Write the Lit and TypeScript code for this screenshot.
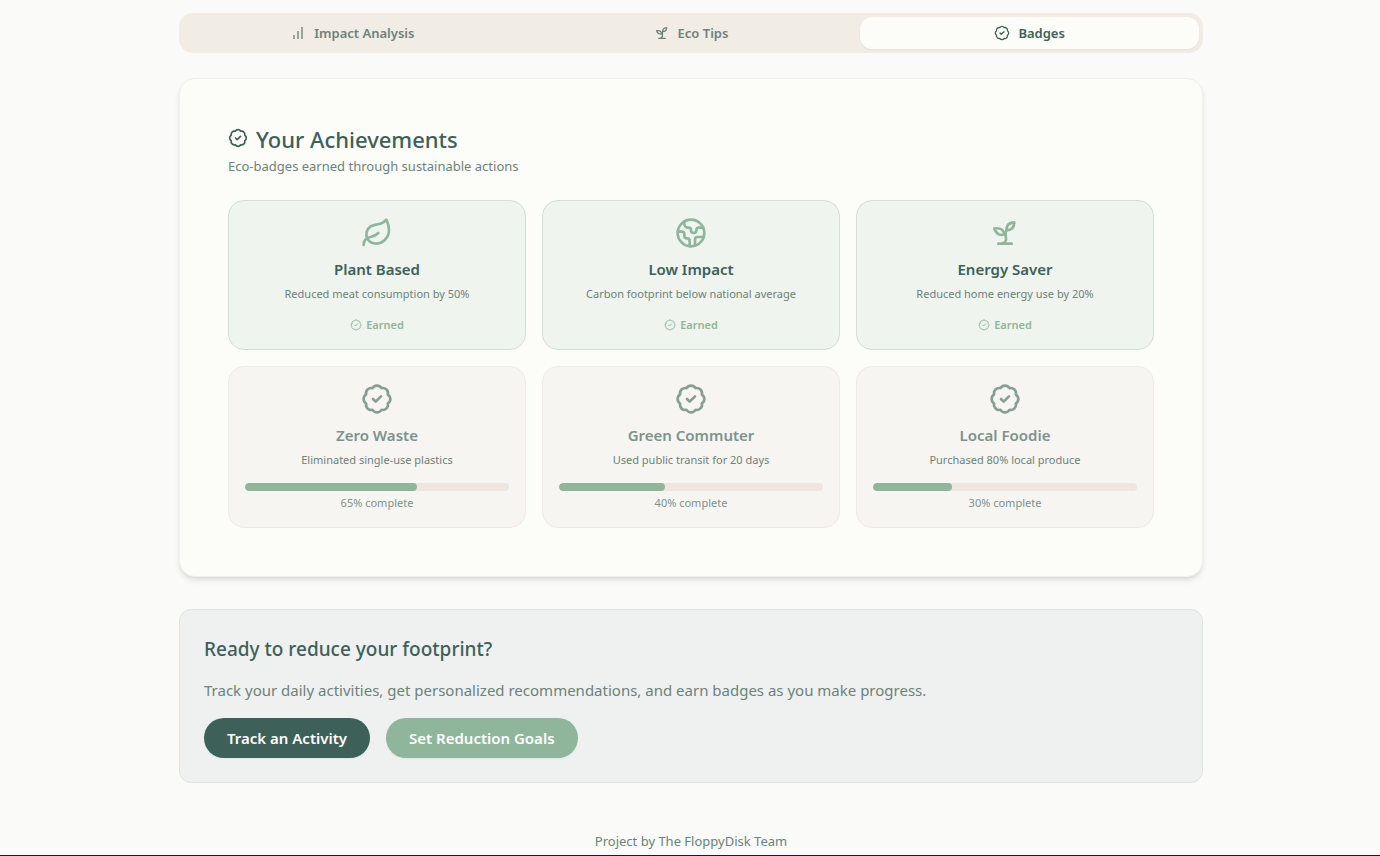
import { LitElement, html, css, svg, nothing } from "lit";
import { customElement, property, state } from "lit/decorators.js";
import { classMap } from "lit/directives/class-map.js";

const glyphs = {
  chart: svg`<path
    d="M4.5 15h3v6h-3zM10.5 9h3v12h-3zM16.5 3h3v18h-3z"
    fill="#95a59c"
    stroke="none"
    shape-rendering="crispEdges"
  />`,
  sprout: svg`
    <path d="M7 20h10" />
    <path d="M10 20c5.5-2.5.8-6.4 3-10" />
    <path d="M9.5 9.4c1.1.8 1.8 2.2 2.3 3.7-2 .4-3.5.4-4.8-.3-1.2-.6-2.3-1.9-3-4.2 2.8-.5 4.4 0 5.5.8z" />
    <path d="M14.1 6a7 7 0 0 0-1.1 4c1.9-.1 3.3-.6 4.3-1.4 1-1 1.6-2.3 1.7-4.6-2.7.1-4 1-4.9 2z" />`,
  badge: svg`
    <path d="M3.85 8.62a4 4 0 0 1 4.78-4.77 4 4 0 0 1 6.74 0 4 4 0 0 1 4.78 4.78 4 4 0 0 1 0 6.74 4 4 0 0 1-4.77 4.78 4 4 0 0 1-6.75 0 4 4 0 0 1-4.78-4.77 4 4 0 0 1 0-6.76Z" />
    <path d="m9 12 2 2 4-4" />`,
  leaf: svg`
    <path d="M11 20A7 7 0 0 1 9.8 6.1C15.5 5 17 4.48 19 2c1 2 2 4.18 2 8 0 5.5-4.78 10-10 10Z" />
    <path d="M2 21c0-3 1.85-5.36 5.08-6C9.5 14.52 12 13 13 12" />`,
  earth: svg`
    <path d="M21.54 15H17a2 2 0 0 0-2 2v4.54" />
    <path d="M7 3.34V5a3 3 0 0 0 3 3a2 2 0 0 1 2 2c0 1.1.9 2 2 2a2 2 0 0 0 2-2c0-1.1.9-2 2-2h3.17" />
    <path d="M11 21.95V18a2 2 0 0 0-2-2a2 2 0 0 1-2-2v-1a2 2 0 0 0-2-2H2.05" />
    <circle cx="12" cy="12" r="10" />`,
};

type Glyph = keyof typeof glyphs;

const icon = (name: Glyph, size: number) => html`<svg
  width=${size}
  height=${size}
  viewBox="0 0 24 24"
  fill="none"
  stroke="currentColor"
  stroke-width="2"
  stroke-linecap="round"
  stroke-linejoin="round"
  aria-hidden="true"
>${glyphs[name]}</svg>`;

interface Badge {
  name: string;
  description: string;
  icon: Glyph;
  progress?: number;
}

const badges: Badge[] = [
  { name: "Plant Based", description: "Reduced meat consumption by 50%", icon: "leaf" },
  { name: "Low Impact", description: "Carbon footprint below national average", icon: "earth" },
  { name: "Energy Saver", description: "Reduced home energy use by 20%", icon: "sprout" },
  { name: "Zero Waste", description: "Eliminated single-use plastics", icon: "badge", progress: 65 },
  { name: "Green Commuter", description: "Used public transit for 20 days", icon: "badge", progress: 40 },
  { name: "Local Foodie", description: "Purchased 80% local produce", icon: "badge", progress: 30 },
];

@customElement("badge-card")
export class BadgeCard extends LitElement {
  @property({ attribute: false }) badge!: Badge;

  static styles = css`
    :host {
      display: block;
    }
    .card {
      box-sizing: border-box;
      display: flex;
      flex-direction: column;
      align-items: center;
      padding: 16px;
      border: 1px solid #cfe1d6;
      border-radius: 16px;
      background: #eff4ee;
      color: #8fb69b;
      text-align: center;
    }
    .card.locked {
      border-color: #f1e9e4;
      background: #f7f5f2;
      color: #869e95;
    }
    svg {
      display: block;
      flex: none;
    }
    .name {
      margin: 8px 0 4px;
      color: #3d6058;
      font-size: 15px;
      font-weight: 600;
      line-height: 24px;
    }
    .locked .name {
      color: #7c938c;
    }
    .description {
      margin: 0 0 14px;
      color: #6c827b;
      font-size: 11px;
      line-height: 18px;
    }
    .earned {
      display: flex;
      align-items: center;
      gap: 4px;
      font-size: 11px;
      font-weight: 600;
      line-height: 16px;
    }
    .track {
      align-self: stretch;
      height: 8px;
      margin-bottom: 4px;
      overflow: hidden;
      border-radius: 4px;
      background: #efe6df;
    }
    .fill {
      height: 100%;
      border-radius: 4px;
      background: #8fb69b;
    }
    .amount {
      color: #7c938c;
      font-size: 11px;
      line-height: 16px;
    }
  `;

  render() {
    const { name, description, icon: glyph, progress } = this.badge;
    const locked = progress !== undefined;
    return html`
      <article class=${classMap({ card: true, locked })}>
        ${icon(glyph, 32)}
        <h3 class="name">${name}</h3>
        <p class="description">${description}</p>
        ${locked
          ? html`
              <div class="track" role="progressbar" aria-label=${name} aria-valuenow=${progress}>
                <div class="fill" style="width: ${progress}%"></div>
              </div>
              <span class="amount">${progress}% complete</span>
            `
          : html`<span class="earned">${icon("badge", 12)}Earned</span>`}
      </article>
    `;
  }
}

@customElement("app-root")
export class AppRoot extends LitElement {
  @state() private active = "Badges";

  private tabs: { label: string; icon: Glyph }[] = [
    { label: "Impact Analysis", icon: "chart" },
    { label: "Eco Tips", icon: "sprout" },
    { label: "Badges", icon: "badge" },
  ];

  static styles = css`
    :host {
      box-sizing: border-box;
      display: flex;
      flex-direction: column;
      min-height: 100vh;
      padding: 13px 16px 4px 18px;
      border-bottom: 1px solid #1f1147;
      background: #fafaf8;
      color: #3d6058;
      font-family: "Noto Sans", "Open Sans", sans-serif;
    }
    main {
      width: 100%;
      max-width: 1024px;
      margin: 0 auto;
    }
    svg {
      display: block;
      flex: none;
    }
    button {
      border: 0;
      font-family: inherit;
      cursor: pointer;
    }
    .tabs {
      display: grid;
      grid-template-columns: repeat(3, 1fr);
      padding: 4px;
      border-radius: 14px;
      background: #f1ece4;
    }
    .tab {
      display: flex;
      align-items: center;
      justify-content: center;
      gap: 8px;
      height: 32px;
      padding: 0 12px;
      border-radius: 12px;
      background: transparent;
      color: #6c827b;
      font-size: 13px;
      font-weight: 600;
      line-height: 20px;
    }
    .tab.active {
      background: #fcfdf8;
      box-shadow: 0 1px 2px rgb(0 0 0 / 5%);
      color: #3d6058;
    }
    .panel {
      margin-top: 25px;
      padding: 48px;
      border: 1px solid #f1f0ed;
      border-radius: 16px;
      background: #fcfdf8;
      box-shadow: 0 4px 6px -1px rgb(0 0 0 / 10%), 0 2px 4px -2px rgb(0 0 0 / 10%);
    }
    .title {
      display: flex;
      gap: 8px;
      margin: 0 0 6px;
      padding-top: 1px;
      font-size: 22px;
      font-weight: 500;
      line-height: 22px;
    }
    .subtitle {
      margin: 0 0 24px;
      color: #6c827b;
      font-size: 13px;
      line-height: 20px;
    }
    .badges {
      display: grid;
      grid-template-columns: repeat(3, 1fr);
      gap: 16px;
    }
    .cta {
      margin-top: 32px;
      padding: 24px;
      border: 1px solid #dde4e1;
      border-radius: 12px;
      background: #eff1f0;
    }
    .question {
      margin: 0 0 14px;
      font-size: 19px;
      font-weight: 500;
      line-height: 30px;
    }
    .pitch {
      margin: 0 0 16px;
      color: #6c827b;
      font-size: 15px;
      line-height: 24px;
    }
    .actions {
      display: flex;
      flex-wrap: wrap;
      gap: 16px;
    }
    .action {
      height: 40px;
      padding: 0 23px;
      border-radius: 20px;
      background: #3d6058;
      box-shadow: 0 1px 2px rgb(0 0 0 / 5%);
      color: #ffffff;
      font-size: 15px;
      font-weight: 600;
      line-height: 24px;
    }
    .action.secondary {
      background: #8fb69b;
    }
    footer {
      margin-top: 48px;
      color: #6c827b;
      font-size: 13px;
      line-height: 20px;
      text-align: center;
    }
  `;

  render() {
    return html`
      <main>
        <div class="tabs" role="tablist">
          ${this.tabs.map(
            (tab) => html`
              <button
                type="button"
                role="tab"
                class=${classMap({ tab: true, active: tab.label === this.active })}
                aria-selected=${tab.label === this.active}
                @click=${() => (this.active = tab.label)}
              >
                ${icon(tab.icon, 16)}${tab.label}
              </button>
            `,
          )}
        </div>
        ${this.active === "Badges"
          ? html`
              <section class="panel" role="tabpanel" aria-label="Badges">
                <h2 class="title">${icon("badge", 20)}Your Achievements</h2>
                <p class="subtitle">Eco-badges earned through sustainable actions</p>
                <div class="badges">
                  ${badges.map((badge) => html`<badge-card .badge=${badge}></badge-card>`)}
                </div>
              </section>
            `
          : nothing}
        <section class="cta">
          <h2 class="question">Ready to reduce your footprint?</h2>
          <p class="pitch">
            Track your daily activities, get personalized recommendations, and earn badges as you make progress.
          </p>
          <div class="actions">
            <button type="button" class="action">Track an Activity</button>
            <button type="button" class="action secondary">Set Reduction Goals</button>
          </div>
        </section>
      </main>
      <footer>Project by The FloppyDisk Team</footer>
    `;
  }
}
